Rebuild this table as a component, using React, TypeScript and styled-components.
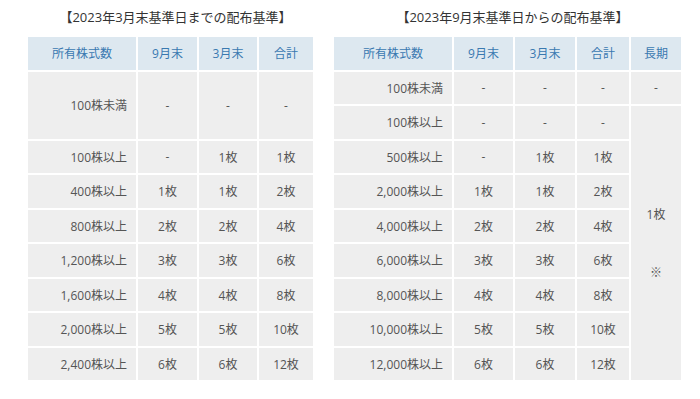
import React from 'react'
import styled, { createGlobalStyle } from 'styled-components'

const GlobalStyle = createGlobalStyle`
	body {
		margin: 0;
		background: #ffffff;
		font-family: 'Open Sans', 'Noto Sans CJK JP', sans-serif;
	}
`

const Page = styled.div`
	display: flex;
	gap: 21px;
	padding: 8px 0 0 28px;
	width: 700px;
	height: 399px;
	box-sizing: border-box;
`

const Section = styled.section`
	display: flex;
	flex-direction: column;
`

const Title = styled.h2`
	margin: 0 0 11px 0;
	height: 18px;
	font-size: 13px;
	font-weight: normal;
	line-height: 19px;
	color: #333333;
	text-align: center;
	padding-left: 10px;
`

const Grid = styled.div<{ $cols: string }>`
	display: grid;
	grid-template-columns: ${(p) => p.$cols};
	grid-auto-rows: 32.5px;
	gap: 2px;
	background: #ffffff;
`

const Head = styled.div`
	background: #dde8f0;
	color: #3a79b0;
	font-size: 12px;
	display: flex;
	align-items: center;
	justify-content: center;
`

const Cell = styled.div<{ $right?: boolean; $span?: number }>`
	background: #eeeeee;
	color: #555555;
	font-size: 12px;
	display: flex;
	align-items: center;
	justify-content: ${(p) => (p.$right ? 'flex-end' : 'center')};
	padding-right: ${(p) => (p.$right ? '9px' : '0')};
	${(p) => (p.$span ? `grid-row: span ${p.$span};` : '')}
`

const LongTerm = styled(Cell)`
	flex-direction: column;
	gap: 40px;
`

const oldRows: [string, string, string, string][] = [
	['100株以上', '-', '1枚', '1枚'],
	['400株以上', '1枚', '1枚', '2枚'],
	['800株以上', '2枚', '2枚', '4枚'],
	['1,200株以上', '3枚', '3枚', '6枚'],
	['1,600株以上', '4枚', '4枚', '8枚'],
	['2,000株以上', '5枚', '5枚', '10枚'],
	['2,400株以上', '6枚', '6枚', '12枚'],
]

const newRows: [string, string, string, string][] = [
	['100株以上', '-', '-', '-'],
	['500株以上', '-', '1枚', '1枚'],
	['2,000株以上', '1枚', '1枚', '2枚'],
	['4,000株以上', '2枚', '2枚', '4枚'],
	['6,000株以上', '3枚', '3枚', '6枚'],
	['8,000株以上', '4枚', '4枚', '8枚'],
	['10,000株以上', '5枚', '5枚', '10枚'],
	['12,000株以上', '6枚', '6枚', '12枚'],
]

const Row = ({ row }: { row: [string, string, string, string] }) => (
	<>
		<Cell $right>{row[0]}</Cell>
		<Cell>{row[1]}</Cell>
		<Cell>{row[2]}</Cell>
		<Cell>{row[3]}</Cell>
	</>
)

export default function App() {
	return (
		<>
			<GlobalStyle />
			<Page>
				<Section>
					<Title>【2023年3月末基準日までの配布基準】</Title>
					<Grid $cols="108px 59px 58px 54px">
						<Head>所有株式数</Head>
						<Head>9月末</Head>
						<Head>3月末</Head>
						<Head>合計</Head>
						<Cell $right $span={2}>100株未満</Cell>
						<Cell $span={2}>-</Cell>
						<Cell $span={2}>-</Cell>
						<Cell $span={2}>-</Cell>
						{oldRows.map((r) => (
							<Row key={r[0]} row={r} />
						))}
					</Grid>
				</Section>
				<Section>
					<Title>【2023年9月末基準日からの配布基準】</Title>
					<Grid $cols="118px 59px 60px 52px 50px">
						<Head>所有株式数</Head>
						<Head>9月末</Head>
						<Head>3月末</Head>
						<Head>合計</Head>
						<Head>長期</Head>
						<Cell $right>100株未満</Cell>
						<Cell>-</Cell>
						<Cell>-</Cell>
						<Cell>-</Cell>
						<Cell>-</Cell>
						{newRows.map((r, i) => (
							<React.Fragment key={r[0]}>
								<Row row={r} />
								{i === 0 && (
									<LongTerm $span={8}>
										<span>1枚</span>
										<span>※</span>
									</LongTerm>
								)}
							</React.Fragment>
						))}
					</Grid>
				</Section>
			</Page>
		</>
	)
}
